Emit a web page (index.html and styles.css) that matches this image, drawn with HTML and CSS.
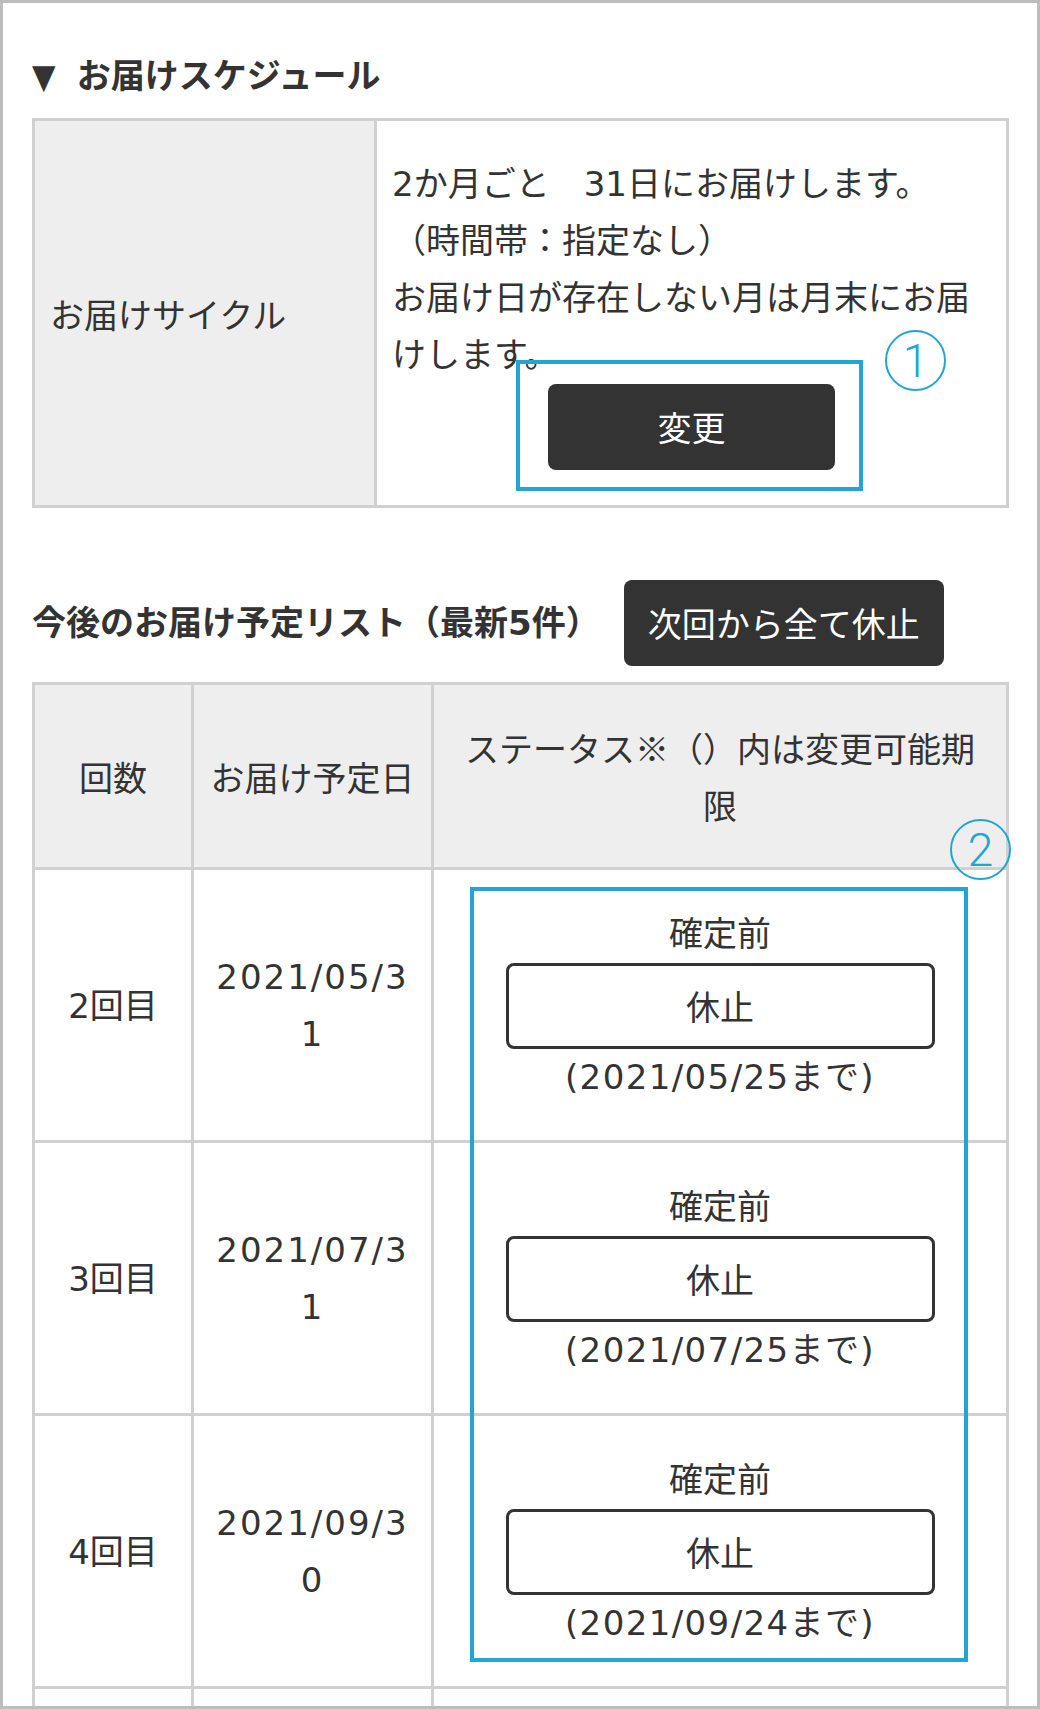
FILE: index.html
```html
<!DOCTYPE html>
<html lang="ja">
<head>
<meta charset="utf-8">
<title>お届けスケジュール</title>
<link rel="stylesheet" href="styles.css">
</head>
<body>
<div class="screen">

  <section class="schedule">
    <h2 class="section-title"><span class="tri">▼</span> お届けスケジュール</h2>
    <table class="data-table cycle-table">
      <tr>
        <th class="cycle-label">お届けサイクル</th>
        <td class="cycle-body">
          <p class="cycle-text">2か月ごと　31日にお届けします。<br>（時間帯：指定なし）<br>お届け日が存在しない月は月末にお届けします。</p>
          <div class="action">
            <span class="anchor">
              <a class="btn btn-dark btn-change" href="#">変更</a>
              <span class="callout callout-change"></span>
              <span class="marker marker-change">1</span>
            </span>
          </div>
        </td>
      </tr>
    </table>
  </section>

  <section class="upcoming">
    <div class="upcoming-head">
      <h2 class="list-title">今後のお届け予定リスト（最新5件）</h2>
      <a class="btn btn-dark btn-pause-all" href="#">次回から全て休止</a>
    </div>
    <div class="table-wrap">
      <table class="data-table plan-table">
        <thead>
          <tr>
            <th class="col-no">回数</th>
            <th class="col-date">お届け予定日</th>
            <th class="col-status">ステータス※（）内は変更可能期限</th>
          </tr>
        </thead>
        <tbody>
          <tr>
            <td>2回目</td>
            <td class="date">2021/05/31</td>
            <td class="status"><p>確定前</p><a class="btn btn-outline" href="#">休止</a><p class="deadline">(2021/05/25まで)</p></td>
          </tr>
          <tr>
            <td>3回目</td>
            <td class="date">2021/07/31</td>
            <td class="status"><p>確定前</p><a class="btn btn-outline" href="#">休止</a><p class="deadline">(2021/07/25まで)</p></td>
          </tr>
          <tr>
            <td>4回目</td>
            <td class="date">2021/09/30</td>
            <td class="status"><p>確定前</p><a class="btn btn-outline" href="#">休止</a><p class="deadline">(2021/09/24まで)</p></td>
          </tr>
          <tr class="row-next">
            <td></td>
            <td></td>
            <td></td>
          </tr>
        </tbody>
      </table>
      <span class="callout callout-status"></span>
      <span class="marker marker-status">2</span>
    </div>
  </section>

</div>
</body>
</html>
```

FILE: styles.css
```css
* {
  box-sizing: border-box;
}

html,
body {
  margin: 0;
  padding: 0;
  background: #fff;
}

body {
  font-family: "DejaVu Sans", "Noto Sans CJK JP", sans-serif;
  font-size: 34px;
  line-height: 57px;
  color: #333;
}

/* device frame */
.screen {
  width: 1040px;
  height: 1709px;
  border: 3px solid #bdbdbd;
  padding: 45px 28px 0 29px;
  overflow: hidden;
  background: #fff;
}

/* headings */
.section-title,
.list-title {
  margin: 0;
  font-size: 34px;
  font-weight: bold;
  line-height: 57px;
  color: #333;
}

.section-title {
  margin-bottom: 13px;
}

.tri {
  display: inline-block;
  width: 33px;
  font-size: 34px;
  font-weight: normal;
  transform: scaleX(0.9);
  transform-origin: left center;
}

/* shared table look */
.data-table {
  width: 100%;
  table-layout: fixed;
  border-collapse: separate;
  border-spacing: 0;
  border-top: 3px solid #d0d0d0;
  border-left: 3px solid #d0d0d0;
}

.data-table th,
.data-table td {
  border-right: 3px solid #d0d0d0;
  border-bottom: 3px solid #d0d0d0;
  font-weight: normal;
  vertical-align: middle;
}

/* delivery cycle */
.cycle-label {
  width: 342px;
  padding: 0 15px;
  background: #eeeeee;
  text-align: left;
  font-family: "Noto Sans CJK JP", sans-serif;
}

.cycle-body {
  padding: 35px 15px;
  text-align: left;
}

.cycle-text {
  margin: 0;
}

.action {
  display: flex;
  justify-content: center;
}

.anchor {
  position: relative;
  display: block;
}

/* buttons */
.btn {
  display: block;
  height: 86px;
  text-align: center;
  text-decoration: none;
  border-radius: 8px;
  font-family: "Noto Sans CJK JP", sans-serif;
}

.btn-dark {
  background: #333;
  color: #fff;
  line-height: 86px;
}

.btn-change {
  width: 287px;
}

.btn-pause-all {
  padding: 0 24px;
  white-space: nowrap;
}

.btn-outline {
  width: 429px;
  margin: 0 auto;
  border: 3px solid #333;
  background: #fff;
  color: #333;
  line-height: 80px;
}

/* upcoming list */
.upcoming-head {
  display: flex;
  align-items: center;
  gap: 24px;
  margin: 72px 0 16px;
}

.table-wrap {
  position: relative;
}

.plan-table th {
  padding: 34px 12px 34px;
  background: #eeeeee;
  text-align: center;
  font-family: "Noto Sans CJK JP", sans-serif;
}

.plan-table th.col-status {
  padding-left: 20px;
  padding-right: 20px;
}

.plan-table .col-no {
  width: 159px;
}

.plan-table .col-date {
  width: 240px;
}

.plan-table td {
  padding: 36px 20px 34px;
  text-align: center;
}

.plan-table td.date {
  padding: 36px 18px 34px;
  letter-spacing: 2px;
  word-break: break-all;
}

.status p {
  margin: 0;
}

.status .deadline {
  letter-spacing: 1.4px;
}

.row-next td {
  height: 270px;
}

/* highlight frames and numbered markers */
.callout {
  position: absolute;
  border: 4px solid #22a5d2;
  pointer-events: none;
}

.callout-change {
  left: -32px;
  top: -24px;
  width: 347px;
  height: 131px;
}

.callout-status {
  left: 438px;
  top: 205px;
  width: 498px;
  height: 775px;
}

.marker {
  position: absolute;
  display: flex;
  align-items: center;
  justify-content: center;
  width: 61px;
  height: 61px;
  border: 2px solid #22a5d2;
  border-radius: 50%;
  color: #22a5d2;
  font-family: "Roboto", sans-serif;
  font-weight: 300;
  font-size: 46px;
  line-height: 1;
}

.marker-change {
  left: 337px;
  top: -54px;
}

.marker-status {
  left: 918px;
  top: 137px;
}
```
